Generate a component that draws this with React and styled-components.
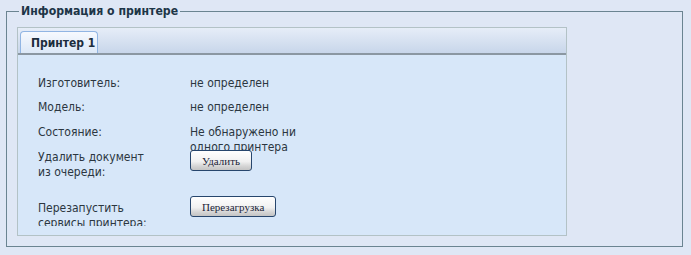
import styled, { createGlobalStyle } from "styled-components";

const GlobalStyle = createGlobalStyle`
    html, body {
        margin: 0;
        padding: 0;
        background-color: #dfe7f5;
    }
    body {
        font-family: "DejaVu Sans Condensed", "DejaVu Sans", Tahoma, sans-serif;
    }
`

const StyledPage = styled.div`
    width: 691px;
    height: 255px;
    padding: 3px 8px 0 6px;
    box-sizing: border-box;
`

const StyledFieldset = styled.fieldset`
    margin: 0;
    padding: 8px 10px 10px 10px;
    border: 1px solid #6b8491;
    min-width: 0;
`

const StyledLegend = styled.legend`
    margin-left: 2px;
    padding: 0 2px;
    font-size: 12.2px;
    font-weight: bold;
    line-height: 16px;
    color: #1d3547;
`

const StyledPanel = styled.div`
    width: 550px;
    border: 1px solid #b3c2c6;
    background-color: #d7e7f9;
    box-sizing: border-box;
`

const StyledTabBar = styled.div`
    display: flex;
    align-items: flex-end;
    height: 25px;
    padding-left: 2px;
    background: linear-gradient(#e6edf8, #c8d6ea);
    border-bottom: 2px solid #8b97a2;
`

const StyledTab = styled.div`
    display: flex;
    align-items: center;
    width: 78px;
    height: 22px;
    padding-left: 10px;
    box-sizing: border-box;
    border: 1px solid #91b5e3;
    border-bottom: none;
    border-radius: 4px 4px 0 0;
    background: linear-gradient(#f6f9fe, #dce8f7);
    font-size: 12px;
    font-weight: bold;
    white-space: nowrap;
    color: #1c2d3d;
`

const StyledBody = styled.div`
    padding: 21px 0 9px 20px;
`

const StyledRows = styled.div`
    height: 150px;
    overflow: hidden;
`

const StyledRow = styled.div`
    display: grid;
    grid-template-columns: 152px 1fr;
    height: ${props => props.height}px;
    font-size: 12px;
    line-height: 15px;
    color: #2b3640;
`

const StyledLabel = styled.div`
    padding-top: ${props => props.offset || 0}px;
`

const StyledValue = styled.div`
    width: 120px;
`

const StyledButton = styled.button`
    height: 21px;
    padding: 0 11px;
    border: 1px solid #27466d;
    border-radius: 3px;
    background: linear-gradient(#ffffff 0%, #f1f1f1 55%, #d4d4d4 80%, #c4c4c4 100%);
    font-family: "Liberation Serif", "Times New Roman", serif;
    font-size: 11px;
    color: #1b2438;
    cursor: pointer;
`

function App() {
    return (
        <>
            <GlobalStyle />
            <StyledPage>
                <StyledFieldset>
                    <StyledLegend>Информация о принтере</StyledLegend>
                    <StyledPanel>
                        <StyledTabBar>
                            <StyledTab>Принтер 1</StyledTab>
                        </StyledTabBar>
                        <StyledBody>
                            <StyledRows>
                                <StyledRow height={24}>
                                    <StyledLabel>Изготовитель:</StyledLabel>
                                    <StyledValue>не определен</StyledValue>
                                </StyledRow>
                                <StyledRow height={25}>
                                    <StyledLabel>Модель:</StyledLabel>
                                    <StyledValue>не определен</StyledValue>
                                </StyledRow>
                                <StyledRow height={25}>
                                    <StyledLabel>Состояние:</StyledLabel>
                                    <StyledValue>Не обнаружено ни одного принтера</StyledValue>
                                </StyledRow>
                                <StyledRow height={46}>
                                    <StyledLabel>Удалить документ<br />из очереди:</StyledLabel>
                                    <div><StyledButton>Удалить</StyledButton></div>
                                </StyledRow>
                                <StyledRow height={40}>
                                    <StyledLabel offset={5}>Перезапустить<br />сервисы принтера:</StyledLabel>
                                    <div><StyledButton>Перезагрузка</StyledButton></div>
                                </StyledRow>
                            </StyledRows>
                        </StyledBody>
                    </StyledPanel>
                </StyledFieldset>
            </StyledPage>
        </>
    )
}

export default App
